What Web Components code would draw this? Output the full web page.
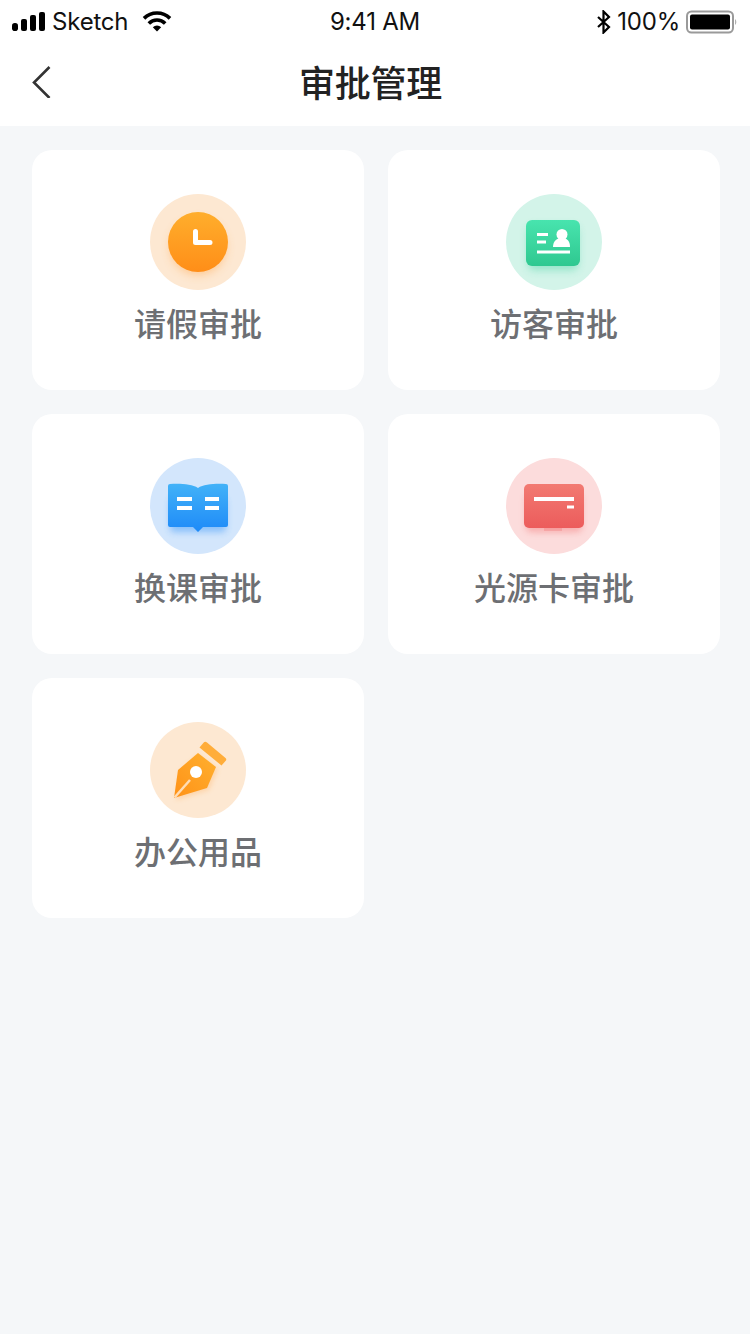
<!DOCTYPE html>
<html lang="zh">
<head>
<meta charset="utf-8">
<title>审批管理</title>
<style>
  html, body { margin: 0; padding: 0; background: #f5f7f9; }
  body { font-family: "Noto Sans CJK SC", sans-serif; min-height: 1334px; }
</style>
</head>
<body>
<status-bar></status-bar>
<nav-bar>审批管理</nav-bar>
<card-grid>
  <approval-card label="请假审批" icon="clock" tint="#fde8d2"></approval-card>
  <approval-card label="访客审批" icon="visitor" tint="#d3f4e9"></approval-card>
  <approval-card label="换课审批" icon="book" tint="#d3e6fc"></approval-card>
  <approval-card label="光源卡审批" icon="card" tint="#fcdcdc"></approval-card>
  <approval-card label="办公用品" icon="pen" tint="#fde8d2"></approval-card>
</card-grid>

<script>
class StatusBar extends HTMLElement {
  constructor() {
    super();
    this.attachShadow({ mode: 'open' });
    this.shadowRoot.innerHTML = `
      <style>
        :host {
          display: grid;
          grid-template-columns: 1fr auto 1fr;
          align-items: center;
          height: 40px;
          padding: 4px 12px 0 12px;
          box-sizing: border-box;
          background: #fff;
          color: #111;
          font: 24px/1 Inter, "Liberation Sans", sans-serif;
          letter-spacing: -0.2px;
        }
        .side { display: flex; align-items: center; }
        .right { justify-content: flex-end; }
        svg { display: block; }
        .carrier { margin: 0 14px 0 6px; }
        .pct { margin: 0 6px 0 5px; }
      </style>
      <div class="side">
        <svg width="34" height="20" viewBox="0 0 34 20">
          <rect x="0" y="11" width="6" height="8" rx="2.800" fill="#000"/>
          <rect x="9" y="7" width="6" height="12" rx="2" fill="#000"/>
          <rect x="18" y="3" width="6" height="16" rx="2" fill="#000"/>
          <rect x="27" y="0" width="6" height="19" rx="2" fill="#000"/>
        </svg>
        <span class="carrier">Sketch</span>
        <svg width="30" height="22" viewBox="0 0 30 22">
          <path d="M2 7.400A18.500 18.500 0 0 1 28 7.400" fill="none" stroke="#000" stroke-width="3.600"/>
          <path d="M6.800 12.400A11.500 11.500 0 0 1 23.200 12.400" fill="none" stroke="#000" stroke-width="3.600"/>
          <path d="M10.800 16.200L15 20.500 19.200 16.200A6 6 0 0 0 10.800 16.200Z" fill="#000"/>
        </svg>
      </div>
      <div>9:41 AM</div>
      <div class="side right">
        <svg width="16" height="24" viewBox="0 0 16 24">
          <path d="M2 7l11 10-5.500 5.500V1.500L13 7 2 17" fill="none" stroke="#000" stroke-width="2.200"/>
        </svg>
        <span class="pct">100%</span>
        <svg width="52" height="24" viewBox="0 0 52 24">
          <rect x="1" y="1.500" width="46" height="21" rx="4.500" fill="none" stroke="#9a9a9a" stroke-width="2"/>
          <rect x="4" y="4.500" width="40" height="15" rx="2" fill="#000"/>
          <path d="M49 9a4 4 0 0 1 0 6Z" fill="#b0b0b0"/>
        </svg>
      </div>
    `;
  }
}

class NavBar extends HTMLElement {
  constructor() {
    super();
    this.attachShadow({ mode: 'open' });
    this.shadowRoot.innerHTML = `
      <style>
        :host {
          display: grid;
          grid-template-columns: 1fr auto 1fr;
          align-items: center;
          height: 86px;
          padding: 0 41px 4px 32px;
          box-sizing: border-box;
          background: #fff;
        }
        svg { display: block; margin-top: 2px; }
        h1 {
          margin: 0;
          font: 500 36px/1 "Noto Sans CJK SC", sans-serif;
          color: #222;
          letter-spacing: -0.2px;
        }
      </style>
      <svg width="20" height="32" viewBox="0 0 20 32">
        <path d="M17.500 1L2 16.500 17.500 32" fill="none" stroke="#333" stroke-width="2.600"/>
      </svg>
      <h1><slot></slot></h1>
      <span></span>
    `;
  }
}

class CardGrid extends HTMLElement {
  constructor() {
    super();
    this.attachShadow({ mode: 'open' });
    this.shadowRoot.innerHTML = `
      <style>
        :host {
          display: grid;
          grid-template-columns: 332px 332px;
          grid-auto-rows: 240px;
          gap: 24px;
          padding: 24px 30px 0 32px;
        }
      </style>
      <slot></slot>
    `;
  }
}

const ICONS = {
  clock: `
    <defs>
      <linearGradient id="g" x1="0" y1="0" x2="0" y2="1">
        <stop offset="0" stop-color="#ffae2c"/><stop offset="1" stop-color="#ff8e18"/>
      </linearGradient>
      <filter id="s" x="-50%" y="-50%" width="200%" height="200%"><feGaussianBlur stdDeviation="5"/></filter>
    </defs>
    <circle cx="48" cy="53" r="28" fill="#ff9a30" opacity=".4" filter="url(#s)"/>
    <circle cx="48" cy="48" r="30" fill="url(#g)"/>
    <path d="M45.500 37.500v11H60" fill="none" stroke="#fff" stroke-width="5" stroke-linecap="round" stroke-linejoin="round"/>`,
  visitor: `
    <defs>
      <linearGradient id="g" x1="0" y1="0" x2="0" y2="1">
        <stop offset="0" stop-color="#48e4ae"/><stop offset="1" stop-color="#2fc890"/>
      </linearGradient>
      <filter id="s" x="-50%" y="-50%" width="200%" height="200%"><feGaussianBlur stdDeviation="4"/></filter>
    </defs>
    <rect x="22" y="32" width="50" height="44" rx="6" fill="#2ecb94" opacity=".4" filter="url(#s)"/>
    <rect x="20" y="26" width="54" height="46" rx="6" fill="url(#g)"/>
    <path d="M31 40.500h11M31 48h9M31 58h33" stroke="#fff" stroke-width="3" fill="none"/>
    <circle cx="56" cy="40.500" r="5.500" fill="#fff"/>
    <path d="M47 53c0-6 4-9 9-9s8 3 8 9Z" fill="#fff"/>`,
  book: `
    <defs>
      <linearGradient id="g" x1="0" y1="0" x2="0" y2="1">
        <stop offset="0" stop-color="#42b2f8"/><stop offset="1" stop-color="#1e8af8"/>
      </linearGradient>
      <filter id="s" x="-50%" y="-50%" width="200%" height="200%"><feGaussianBlur stdDeviation="3.500"/></filter>
    </defs>
    <rect x="20" y="40" width="56" height="34" rx="4" fill="#2a90f8" opacity=".45" filter="url(#s)"/>
    <path d="M18 28a2 2 0 0 1 2-2c11-.500 22 0 28 4 6-4 17-4.500 28-4a2 2 0 0 1 2 2v39a2 2 0 0 1-2 2H53l-5 5-5-5H20a2 2 0 0 1-2-2V28Z" fill="url(#g)"/>
    <path d="M27 41h15M27 50h15M55 41h14M55 50h14" stroke="#fff" stroke-width="4" fill="none"/>`,
  card: `
    <defs>
      <linearGradient id="g" x1="0" y1="0" x2="0" y2="1">
        <stop offset="0" stop-color="#f27a72"/><stop offset="1" stop-color="#ec5c5c"/>
      </linearGradient>
      <filter id="s" x="-50%" y="-50%" width="200%" height="200%"><feGaussianBlur stdDeviation="3.500"/></filter>
    </defs>
    <rect x="20" y="36" width="56" height="38" rx="5" fill="#f06060" opacity=".4" filter="url(#s)"/>
    <rect x="38" y="70" width="18" height="3" fill="#f06060" opacity=".25"/>
    <rect x="18" y="26" width="60" height="44" rx="5" fill="url(#g)"/>
    <path d="M28 41h40" stroke="#fff" stroke-width="4" fill="none"/>
    <path d="M61 49h7" stroke="#fff" stroke-width="3" fill="none"/>`,
  pen: `
    <defs>
      <linearGradient id="g" x1="1" y1="0" x2="0" y2="1">
        <stop offset="0" stop-color="#ffb02e"/><stop offset="1" stop-color="#ff9218"/>
      </linearGradient>
      <filter id="s" x="-50%" y="-50%" width="200%" height="200%"><feGaussianBlur stdDeviation="2.500"/></filter>
    </defs>
    <path d="M48 33L68 47 59 68 26 78 30 50Z" fill="#ff9a30" opacity=".25" filter="url(#s)"/>
    <path d="M57 20.500L75.500 36a2 2 0 0 1 .200 2.800L71.500 43.500 49.500 25.500 53.500 20.700a2.500 2.500 0 0 1 3.500-.200Z" fill="#ffad3a"/>
    <path d="M48 31L66 45 57 66 24 76 28 48Z" fill="url(#g)"/>
    <path d="M24.500 75.500L40 58" stroke="#ffdcb4" stroke-width="2.500"/>
    <circle cx="46" cy="50" r="6" fill="#fff"/>`
};

class ApprovalCard extends HTMLElement {
  constructor() {
    super();
    this.attachShadow({ mode: 'open' });
    this.shadowRoot.innerHTML = `
      <style>
        :host {
          display: flex;
          flex-direction: column;
          align-items: center;
          padding-top: 44px;
          box-sizing: border-box;
          background: #fff;
          border-radius: 20px;
        }
        .disc {
          width: 96px;
          height: 96px;
          border-radius: 50%;
          background: var(--tint);
        }
        svg { display: block; }
        .label {
          margin-top: 9px;
          font: 500 32px/46px "Noto Sans CJK SC", sans-serif;
          color: #6d6f73;
        }
      </style>
      <div class="disc" style="--tint:${this.getAttribute('tint')}">
        <svg width="96" height="96" viewBox="0 0 96 96">${ICONS[this.getAttribute('icon')]}</svg>
      </div>
      <div class="label">${this.getAttribute('label')}</div>
    `;
  }
}

customElements.define('status-bar', StatusBar);
customElements.define('nav-bar', NavBar);
customElements.define('card-grid', CardGrid);
customElements.define('approval-card', ApprovalCard);
</script>
</body>
</html>
